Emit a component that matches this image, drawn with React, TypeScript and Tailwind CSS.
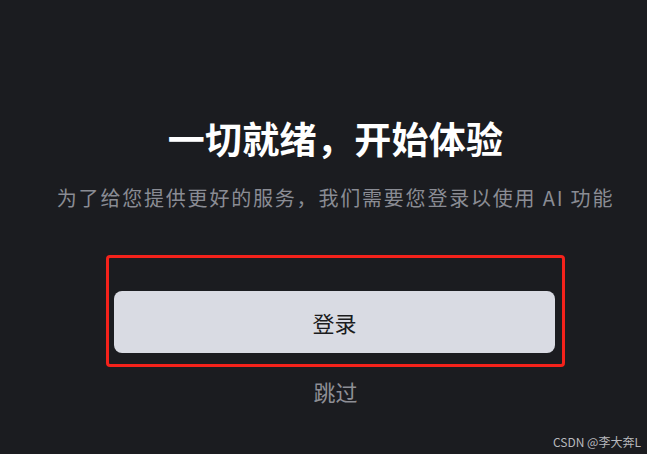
export default function App() {
  return (
    <div
      className="relative flex h-[454px] w-[647px] flex-col items-center overflow-hidden bg-[#1b1c20] pl-[24px]"
      style={{ fontFamily: '"Noto Sans CJK SC", "Noto Sans", sans-serif' }}
    >
      <h1 className="mt-[116px] text-[37px] font-bold leading-[44px] tracking-[0.3px] text-white">
        一切就绪，开始体验
      </h1>
      <p className="mt-[24px] text-[20px] leading-[28px] tracking-[1.8px] text-[#8a8c94]">
        为了给您提供更好的服务，我们需要您登录以使用 AI 功能
      </p>

      <div className="mt-[43px] flex h-[112px] w-[459px] flex-col rounded-[4px] border-[3px] border-[#f5221b] pl-[5px] pr-[7px] pt-[33px]">
        <button className="h-[62px] w-full rounded-[8px] bg-[#d9dbe3] text-[22px] text-[#1b1c20]">
          登录
        </button>
      </div>

      <button className="mt-[7px] text-[22px] leading-[34px] text-[#8e8f96]">跳过</button>

      <span className="absolute bottom-[3px] right-[6px] text-[12px] text-[#b8b9bd]">
        CSDN @李大奔L
      </span>
    </div>
  );
}
